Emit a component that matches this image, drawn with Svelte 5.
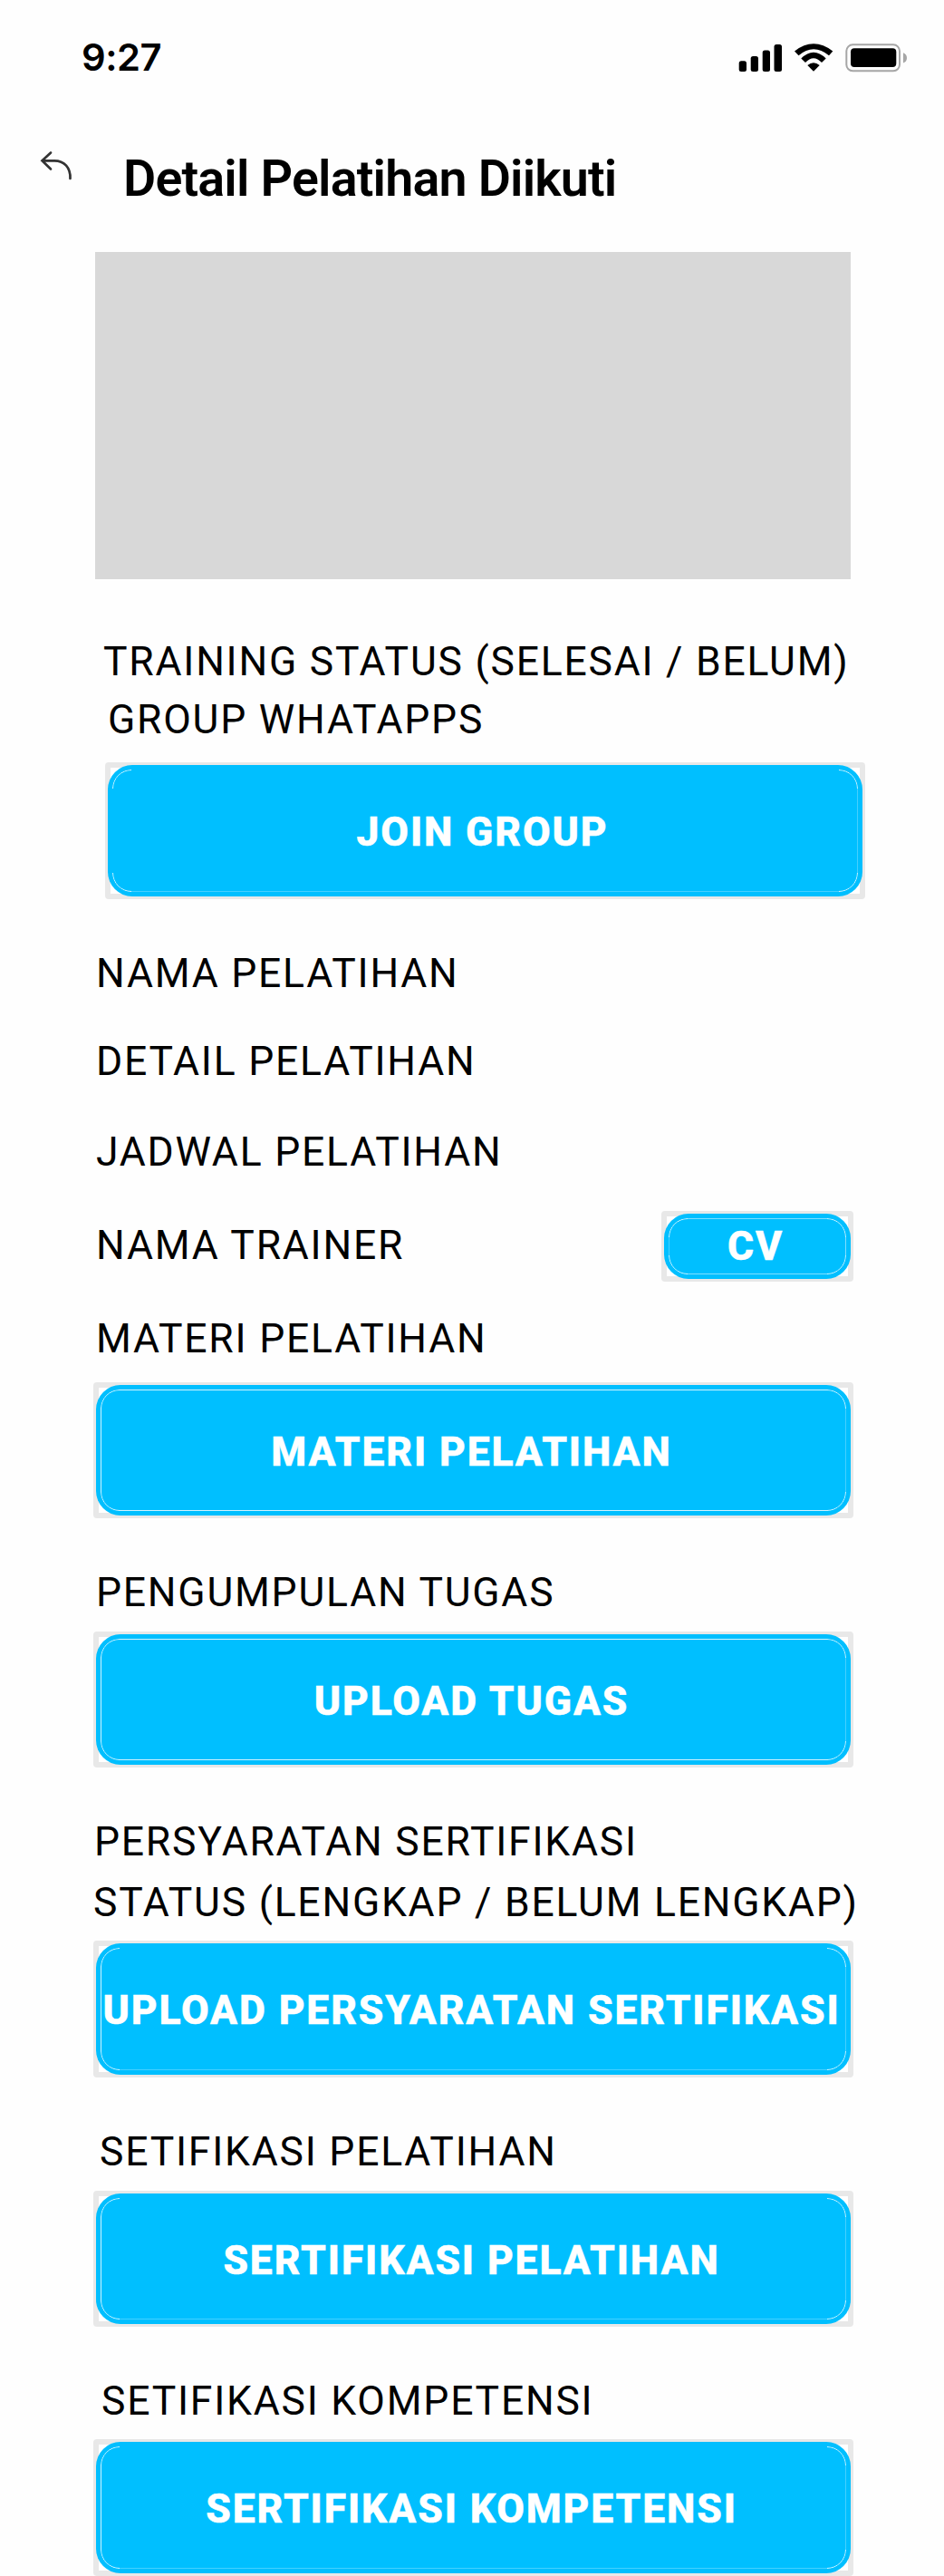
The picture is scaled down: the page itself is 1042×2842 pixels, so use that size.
<script>
  const time = '9:27';
</script>

<main>
  <header class="status">
    <span class="time">{time}</span>
    <svg class="indicators" width="190" height="36" viewBox="0 0 190 36">
      <rect x="0.700" y="20.300" width="8.300" height="11.700" rx="2.500" />
      <rect x="13.700" y="15" width="8.300" height="17" rx="2.500" />
      <rect x="26.700" y="8.500" width="8.300" height="23.500" rx="2.500" />
      <rect x="39.500" y="2" width="8.500" height="30" rx="2.500" />
      <path d="M62 9.500Q83 -6.800 104.300 9.500L100 14.300Q83 0.300 66.500 14.300Z" />
      <path d="M69.300 17.500Q83 4 96.700 17.500L92 22Q83 12.600 74 22Z" />
      <path d="M76.300 25Q83 19.600 89.700 25L83 31.800Z" />
      <rect x="119.300" y="2.300" width="58.700" height="29" rx="7" class="shell" />
      <rect x="124" y="6.300" width="50.300" height="20.700" rx="4" />
      <path class="tip" d="M182 11.300Q186 13 186 17T182 22.500Z" />
    </svg>
  </header>
  <div class="titlebar">
    <svg class="back" width="37" height="34" viewBox="0 0 37 34">
      <path d="M13 2.500L3.500 11.300L13 20.500M3.500 11.300H17C28 11.300 35 19 34.500 31" />
    </svg>
    <h1>Detail Pelatihan Diikuti</h1>
  </div>
  <div class="banner"></div>

  <p class="label l1">TRAINING STATUS (SELESAI / BELUM)</p>
  <p class="label l2">GROUP WHATAPPS</p>
  <button class="b1"><span>JOIN GROUP</span></button>

  <p class="label l3">NAMA PELATIHAN</p>
  <p class="label l4">DETAIL PELATIHAN</p>
  <p class="label l5">JADWAL PELATIHAN</p>
  <div class="trainer">
    <p class="label">NAMA TRAINER</p>
    <button class="small"><span>CV</span></button>
  </div>
  <p class="label l7">MATERI PELATIHAN</p>
  <button class="b2"><span>MATERI PELATIHAN</span></button>

  <p class="label l8">PENGUMPULAN TUGAS</p>
  <button class="b3"><span>UPLOAD TUGAS</span></button>

  <p class="label l9">PERSYARATAN SERTIFIKASI</p>
  <p class="label l10">STATUS (LENGKAP / BELUM LENGKAP)</p>
  <button class="b4"><span>UPLOAD PERSYARATAN SERTIFIKASI</span></button>

  <p class="label l11">SETIFIKASI PELATIHAN</p>
  <button class="b5"><span>SERTIFIKASI PELATIHAN</span></button>

  <p class="label l12">SETIFIKASI KOMPETENSI</p>
  <button class="b6"><span>SERTIFIKASI KOMPETENSI</span></button>
</main>

<style>
  :global(body) { margin: 0; background: #fefefe; }
  main {
    width: 1042px;
    height: 2842px;
    overflow: hidden;
    background: #fefefe;
    font-family: Roboto, sans-serif;
    color: #000;
    display: flex;
    flex-direction: column;
    align-items: flex-start;
  }
  main > * { flex-shrink: 0; }
  .status {
    width: 100%;
    height: 128px;
    box-sizing: border-box;
    padding: 38px 37px 0 90px;
    display: flex;
    justify-content: space-between;
    align-items: flex-start;
  }
  .time { font: 600 41.7px/50px Inter, sans-serif; letter-spacing: -0.5px; }
  .indicators { margin-top: 9px; }
  .shell { fill: none; stroke: #a6a6a6; stroke-width: 2; }
  .tip { fill: #a6a6a6; }
  .titlebar { display: flex; align-items: flex-start; height: 150px; padding-left: 43px; }
  .back { margin-top: 38px; fill: none; stroke: #333; stroke-width: 2.7; stroke-linecap: round; }
  h1 { margin: 36px 0 0 56px; font-size: 55.6px; line-height: 66px; font-weight: 600; letter-spacing: -0.83px; white-space: nowrap; }
  .banner { width: 834px; height: 361px; margin-left: 105px; background: #d8d8d8; }
  .label {
    margin: 0;
    height: 52px;
    font-size: 44.46px;
    line-height: 52px;
    letter-spacing: 1.78px;
    white-space: nowrap;
  }
  button {
    --strong: #d0f3ff;
    --faint: #45d0ff;
    --none: #00bfff;
    --top: var(--none);
    --right: var(--faint);
    --bottom: var(--faint);
    --left: var(--strong);
    box-sizing: border-box;
    width: 839px;
    height: 150px;
    margin: 0 0 0 103px;
    padding: 0;
    border: 6px solid #e8e8e8;
    border-radius: 4px;
    background: #fff;
    color: #fff;
    font: 800 44.46px/52px Roboto, sans-serif;
    -webkit-text-stroke: 0.5px #fff;
    display: flex;
    position: relative;
  }
  /* Blue face, with a hairline along each straight edge */
  button::before {
    content: '';
    position: absolute;
    inset: -3px;
    border-radius: 27px;
    background:
      linear-gradient(var(--top) 0 0) center 5px / calc(100% - 52px) 1px no-repeat,
      linear-gradient(var(--bottom) 0 0) center calc(100% - 5px) / calc(100% - 52px) 1px no-repeat,
      linear-gradient(var(--left) 0 0) 5px center / 1px calc(100% - 52px) no-repeat,
      linear-gradient(var(--right) 0 0) calc(100% - 5px) center / 1px calc(100% - 52px) no-repeat,
      #00bfff;
  }
  /* Brighter hairline around the corners only */
  button::after {
    content: '';
    position: absolute;
    inset: 2px;
    border: 1px solid #d8f5ff;
    border-radius: 21px;
    mask:
      linear-gradient(#000 0 0) 0 0 / 21px 21px no-repeat,
      linear-gradient(#000 0 0) 100% 0 / 21px 21px no-repeat,
      linear-gradient(#000 0 0) 0 100% / 21px 21px no-repeat,
      linear-gradient(#000 0 0) 100% 100% / 21px 21px no-repeat;
  }
  button span {
    z-index: 1;
    width: 100%;
    margin-left: -2px;
    padding-top: 3px;
    align-self: center;
    text-align: center;
    letter-spacing: 1.88px;
    white-space: nowrap;
  }
  .l1 { margin: 65px 0 0 114px; }
  .l2 { margin: 12px 0 0 119px; }
  .b1 { margin: 21px 0 0 116px; height: 151px; --left: var(--none); }
  .b1 span { margin-left: -3px; }
  .l3 { margin: 56px 0 0 106px; }
  .l4 { margin: 45px 0 0 106px; }
  .l5 { margin: 48px 0 0 106px; }
  .trainer { display: flex; width: 839px; height: 78px; margin: 39px 0 0 103px; justify-content: space-between; }
  .trainer .label { margin: 12px 0 0 3px; }
  .small {
    width: 212px;
    height: 78px;
    margin: 0;
    --top: #80dfff;
    --right: #80dfff;
    --bottom: #80dfff;
    --left: var(--faint);
  }
  .small span { padding-top: 0; margin-left: -2px; }
  .l7 { margin: 37px 0 0 106px; }
  .b2 { margin-top: 22px; --top: var(--strong); --bottom: var(--strong); }
  .l8 { margin: 56px 0 0 106px; }
  .b3 { margin-top: 17px; --top: var(--strong); --bottom: var(--strong); }
  .l9 { margin: 56px 0 0 104px; }
  .l10 { margin: 15px 0 0 103px; }
  .b4 { margin-top: 16px; height: 151px; }
  .l11 { margin: 56px 0 0 110px; }
  .b5 { margin-top: 17px; }
  .l12 { margin: 56px 0 0 112px; }
  .b6 { margin-top: 16px; height: 151px; }
</style>
